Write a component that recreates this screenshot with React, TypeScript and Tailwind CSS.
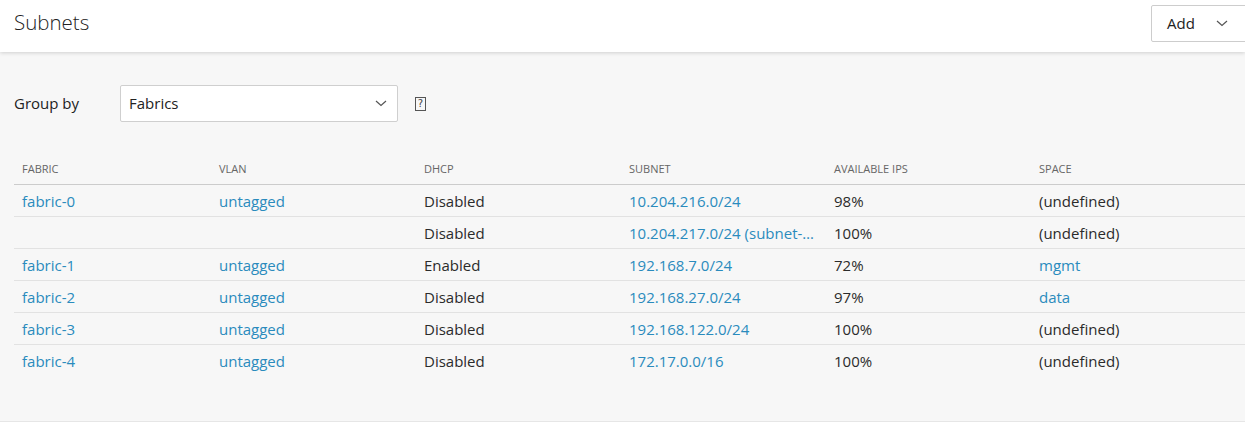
import React from "react";

const rows = [
  { fabric: "fabric-0", vlan: "untagged", dhcp: "Disabled", subnet: "10.204.216.0/24", ips: "98%", space: "(undefined)", spaceLink: false },
  { fabric: "", vlan: "", dhcp: "Disabled", subnet: "10.204.217.0/24 (subnet-217)", ips: "100%", space: "(undefined)", spaceLink: false },
  { fabric: "fabric-1", vlan: "untagged", dhcp: "Enabled", subnet: "192.168.7.0/24", ips: "72%", space: "mgmt", spaceLink: true },
  { fabric: "fabric-2", vlan: "untagged", dhcp: "Disabled", subnet: "192.168.27.0/24", ips: "97%", space: "data", spaceLink: true },
  { fabric: "fabric-3", vlan: "untagged", dhcp: "Disabled", subnet: "192.168.122.0/24", ips: "100%", space: "(undefined)", spaceLink: false },
  { fabric: "fabric-4", vlan: "untagged", dhcp: "Disabled", subnet: "172.17.0.0/16", ips: "100%", space: "(undefined)", spaceLink: false },
];

const grid = "grid grid-cols-[205px_205px_205px_205px_205px_1fr]";

function Chevron({ className }: { className?: string }) {
  return (
    <svg className={className} width="12" height="7" viewBox="0 0 12 7" fill="none">
      <path d="M1 1l5 4.5L11 1" stroke="#555" strokeWidth="1.2" />
    </svg>
  );
}

export default function App() {
  return (
    <div className="w-[1245px] h-[423px] overflow-hidden bg-white text-[#333] font-['Open_Sans',sans-serif]">
      <header className="relative z-10 h-[52px] bg-white shadow-[0_1px_4px_rgba(0,0,0,0.16)] flex items-start justify-between pl-[14px]">
        <h1 className="mt-[8px] text-[20.5px] leading-[28px] text-[#222] font-light">Subnets</h1>
        <button className="mt-[5px] -mr-[10px] h-[37px] w-[104px] border border-[#cdcdcd] rounded-[2px] bg-white flex items-center pl-[15px] text-[15px] text-[#222]">
          <span>Add</span>
          <Chevron className="ml-[21px]" />
        </button>
      </header>
      <main className="bg-[#f7f7f7] h-[370px] border-b border-[#e6e6e6] pl-[14px]">
        <div className="flex items-center pt-[33px]">
          <span className="w-[106px] text-[15px] text-[#222]">Group by</span>
          <div className="w-[278px] h-[37px] bg-white border border-[#cfcfcf] rounded-[2px] flex items-center justify-between pl-[8px] pr-[10px] text-[15px] text-[#222]">
            <span>Fabrics</span>
            <Chevron />
          </div>
          <span className="ml-[17px] w-[11px] h-[14px] border border-[#555] flex items-center justify-center text-[10px] leading-none text-[#444] font-['DejaVu_Sans',sans-serif]">?</span>
        </div>
        <div className="mt-[32px]">
          <div className={`${grid} h-[31px] items-center border-b border-[#cccccc] text-[11px] uppercase text-[#666]`}>
            <div className="pl-[8px]">Fabric</div>
            <div>VLAN</div>
            <div>DHCP</div>
            <div>Subnet</div>
            <div>Available IPs</div>
            <div>Space</div>
          </div>
          {rows.map((r, i) => (
            <div key={i} className={`${grid} h-[32px] items-center pt-[1px] text-[15px] ${i < rows.length - 1 ? "border-b border-[#e2e2e2]" : ""}`}>
              <div className="pl-[8px] text-[#2a8bbd]">{r.fabric}</div>
              <div className="text-[#2a8bbd]">{r.vlan}</div>
              <div className="text-[#2b2b2b]">{r.dhcp}</div>
              <div className="min-w-0 pr-[14px]">
                <div className="text-[#2a8bbd] truncate">{r.subnet}</div>
              </div>
              <div className="text-[#2b2b2b]">{r.ips}</div>
              <div className={r.spaceLink ? "text-[#2a8bbd]" : "text-[#2b2b2b]"}>{r.space}</div>
            </div>
          ))}
        </div>
      </main>
    </div>
  );
}
